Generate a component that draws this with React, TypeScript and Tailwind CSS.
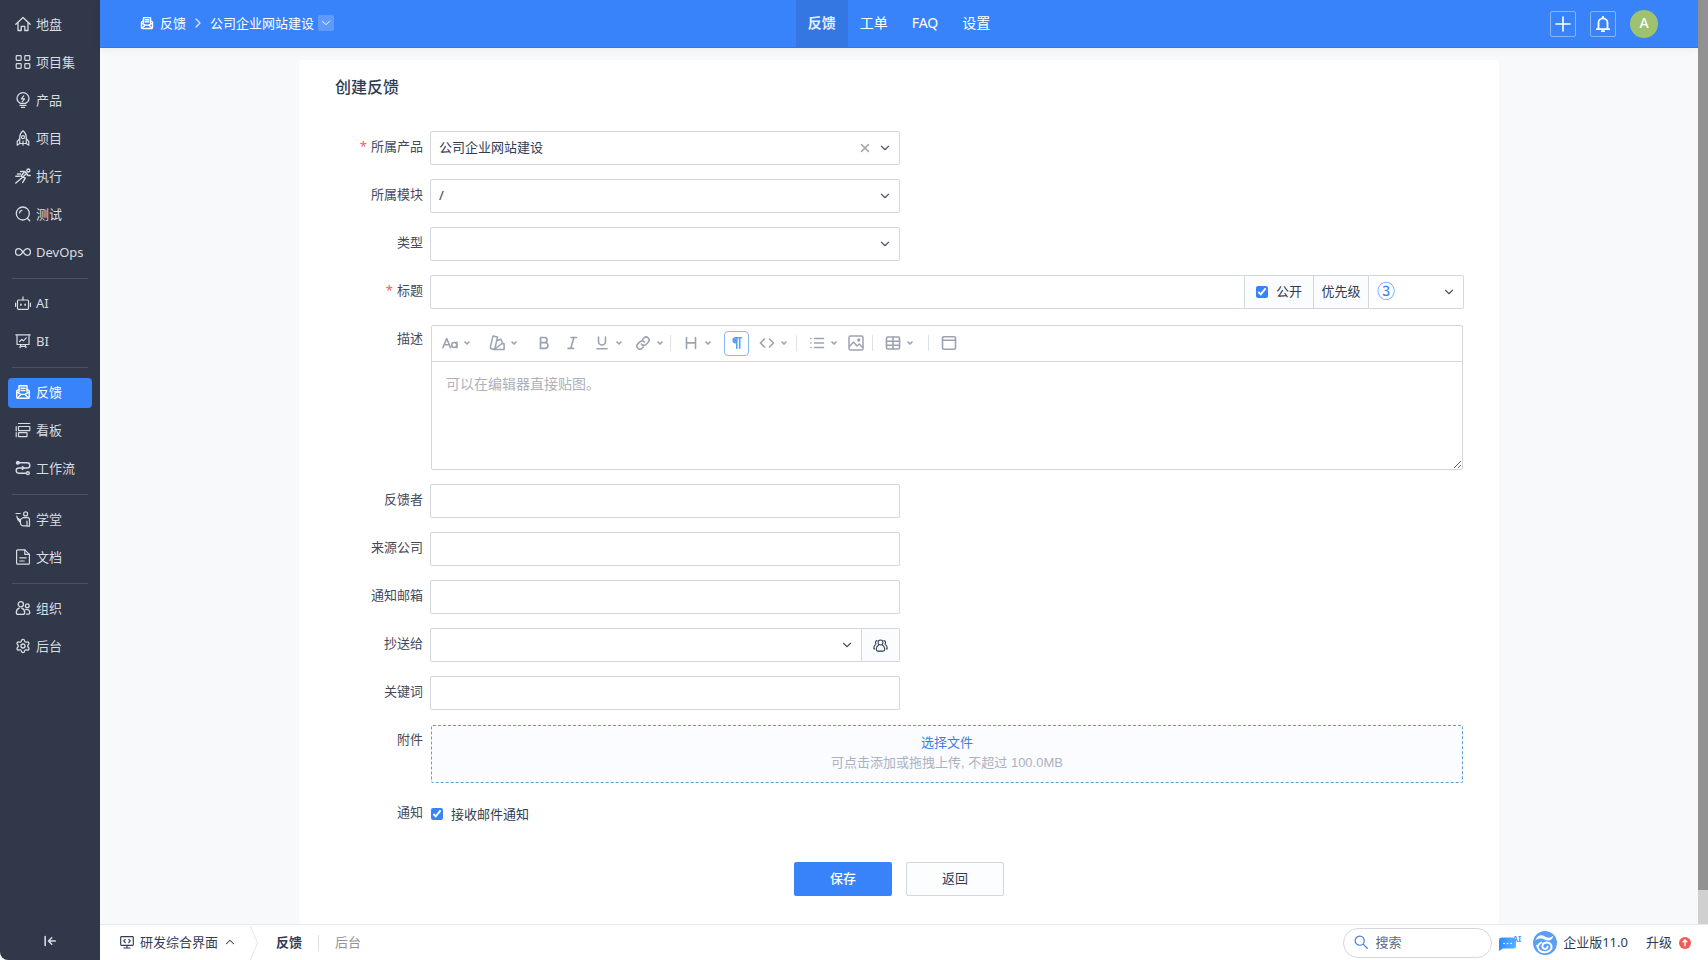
import type { ReactNode, SelectHTMLAttributes } from "react";
import { ChevronDown, ChevronRight, ChevronUp, Settings, X } from "lucide-react";

interface NavItem {
  label: string;
  icon: ReactNode;
  active?: boolean;
}

interface ToolbarItem {
  label: string;
  icon: ReactNode;
  className: string;
  menu?: boolean;
  active?: boolean;
  divider?: string;
}

interface IconProps {
  children: ReactNode;
  className?: string;
  width?: number;
}

function Icon({ children, className = "size-4", width = 1.2 }: IconProps) {
  return (
    <svg
      viewBox="0 0 16 16"
      fill="none"
      stroke="currentColor"
      strokeWidth={width}
      strokeLinecap="round"
      strokeLinejoin="round"
      aria-hidden="true"
      className={`shrink-0 ${className}`}
    >
      {children}
    </svg>
  );
}

const feedbackShape = (
  <>
    <path d="M4 8V1.8h8V8" />
    <path d="M6 4.3h4M6 6.5h4" />
    <path d="M4 5.2 1.7 6.8v6.4c0 .7.5 1.1 1.1 1.1h10.4c.6 0 1.1-.4 1.1-1.1V6.8L12 5.2" />
    <path d="M1.8 8.2 6 10.4h4l4.2-2.2M2.3 13.8 6 10.4M13.7 13.8 10 10.4" />
  </>
);

const navGroups: NavItem[][] = [
  [
    {
      label: "地盘",
      icon: (
        <Icon width={1.3}>
          <path d="M.8 8.3 8 1.5l7.2 6.8" />
          <path d="M3 6.8v7.7h3.2v-4.2h3.6v4.2H13V6.8" />
        </Icon>
      )
    },
    {
      label: "项目集",
      icon: (
        <Icon>
          <rect x="1.2" y="1.6" width="5" height="4.8" rx=".8" />
          <rect x="9.8" y="1.6" width="5" height="4.8" rx=".8" />
          <rect x="1.2" y="9.6" width="5" height="4.8" rx=".8" />
          <rect x="9.8" y="9.6" width="5" height="4.8" rx=".8" />
        </Icon>
      )
    },
    {
      label: "产品",
      icon: (
        <Icon>
          <path d="M5.4 11.4C3.3 10.3 2 8.7 2 6.5a6 5.9 0 0 1 12 0c0 2.200-1.300 3.800-3.400 4.900z" />
          <path d="M8.700 3.800 6.400 6.900h3.200L7.300 9.600" />
          <path d="M5 13.400h6M6.500 15.400h3" />
        </Icon>
      )
    },
    {
      label: "项目",
      icon: (
        <Icon>
          <path d="M8 .8C5.800 2.600 4.700 4.900 4.700 7.500v6h6.600v-6C11.300 4.900 10.200 2.600 8 .8z" />
          <circle cx="8" cy="7.200" r="1.500" />
          <path d="M4.700 8.600 2.200 11.500v3.700l2.500-1.700M11.300 8.600l2.500 2.900v3.700l-2.500-1.700M8 11.200v4" />
        </Icon>
      )
    },
    {
      label: "执行",
      icon: (
        <Icon width={1.4}>
          <circle cx="13.300" cy="2.500" r="1.500" />
          <path d="M5.500 3.500h4.200l2 1.700-4 4L.8 15M9.300 4.300 5.800 8.200l4.500 2-2.600 4.200M11.700 5.200l1 2.300h2.500" />
          <path d="M2.500 6h3M.8 8.300h3.500" />
        </Icon>
      )
    },
    {
      label: "测试",
      icon: (
        <Icon width={1.3}>
          <circle cx="7.800" cy="7.500" r="6.500" />
          <path d="m12.300 12.300 2.500 2.500M4.500 6.800a3.400 3.400 0 0 1 2.300-2.500" />
        </Icon>
      )
    },
    {
      label: "DevOps",
      icon: (
        <Icon width={1.4}>
          <path d="M8 8C6.700 6.200 5.600 4.600 3.900 4.600a3.400 3.400 0 0 0 0 6.800C5.600 11.400 6.700 9.800 8 8s2.400-3.400 4.100-3.400a3.400 3.400 0 0 1 0 6.800C10.400 11.400 9.300 9.800 8 8z" />
        </Icon>
      )
    }
  ],
  [
    {
      label: "AI",
      icon: (
        <Icon>
          <rect x="2.500" y="5" width="11" height="9.300" rx="1" />
          <path d="M8 5V1.800M.6 8v3.500M15.400 8v3.500" />
          <path d="M5.900 9.200v1M10.100 9.200v1" strokeWidth="1.600" />
        </Icon>
      )
    },
    {
      label: "BI",
      icon: (
        <Icon>
          <path d="M.8 1.800h14.400M2 1.800v9.700h12V1.800M6 11.500l-1 3.200M10 11.500l1 3.200M5 13.400h6" />
          <path d="m4.600 8.500 2.200-2.200 1.500 1.500 3-3" />
        </Icon>
      )
    }
  ],
  [
    { label: "反馈", active: true, icon: <Icon width={1.4}>{feedbackShape}</Icon> },
    {
      label: "看板",
      icon: (
        <Icon>
          <path d="M3.500 1.500h11.300M1.200 4.500v4.300M1.200 10.500v4.300" />
          <rect x="3.500" y="4.500" width="11.300" height="4.200" rx=".4" />
          <rect x="3.500" y="10.600" width="8.500" height="4" rx=".4" />
        </Icon>
      )
    },
    {
      label: "工作流",
      icon: (
        <Icon width={1.4}>
          <circle cx="2.800" cy="2.800" r="1.300" fill="currentColor" />
          <path d="M4 2.800h8.200a2.600 2.600 0 0 1 0 5.200H3.800a2.600 2.600 0 0 0 0 5.200h7.400" />
          <path d="m7.300 6.600 1.700 1.400-1.700 1.400" />
          <circle cx="12.900" cy="13.200" r="1.400" />
        </Icon>
      )
    }
  ],
  [
    {
      label: "学堂",
      icon: (
        <Icon>
          <path d="M1 2.500h4.200M1.800 5.200c.5 2.600 1.500 4.800 3.500 6M3.300 7.600l1.800 1.300L8 6.600h4.500c1.300 0 2 .8 2 2v6.500h-2.600M12 10v5M5.400 9.200v2.200c0 2.200 1.200 3.500 3.400 3.500H12" />
          <circle cx="10.600" cy="2.900" r="2" />
        </Icon>
      )
    },
    {
      label: "文档",
      icon: (
        <Icon>
          <path d="M9.800.8H2.600c-.6 0-1 .4-1 1v12.400c0 .6.4 1 1 1h10.800c.6 0 1-.4 1-1V5.400z" />
          <path d="M9.800.8v4.600h4.600M4.800 8.800h6.400M4.800 12h4.500" />
        </Icon>
      )
    }
  ],
  [
    {
      label: "组织",
      icon: (
        <Icon width={1.3}>
          <circle cx="5.800" cy="4.300" r="2.600" />
          <circle cx="12.300" cy="5.800" r="1.900" />
          <path d="M4.200 8.200c-1.800.7-2.900 2.300-2.900 4.300 0 1.200.7 1.900 1.900 1.900h4.600c1.200 0 1.900-.7 1.900-1.900 0-2-1.100-3.600-2.900-4.300M10.800 9.500c2.200-.5 4 .9 4 3.300 0 .9-.5 1.400-1.400 1.400h-1.700" />
        </Icon>
      )
    },
    { label: "后台", icon: <Settings className="size-4 shrink-0" /> }
  ]
];

const headerTabs = ["反馈", "工单", "FAQ", "设置"];

const toolbar: ToolbarItem[] = [
  {
    label: "字体",
    className: "",
    menu: true,
    icon: (
      <Icon width={1.6}>
        <path d="M.9 12.700 4.700 3.500l3.800 9.200M2.200 9.800h5" />
        <circle cx="12.300" cy="10" r="2.500" />
        <path d="M14.900 7.200v5.500" />
      </Icon>
    )
  },
  {
    label: "颜色",
    className: "ml-4.5",
    menu: true,
    icon: (
      <Icon width={1.5}>
        <path d="m4 1 4.500 1.100-2.300 10.300a2.400 2.400 0 0 1-4.700-1zM8.300 5.500l3.400-1.300 2 3.800-8.700 6.500M12.500 8.700h2.600v5.800H4.500" />
      </Icon>
    )
  },
  {
    label: "加粗",
    className: "ml-4.5",
    icon: (
      <Icon width={1.7}>
        <path d="M4.500 2.500h4a2.600 2.600 0 0 1 0 5.200h-4zM4.500 7.700h4.600a2.800 2.800 0 0 1 0 5.700H4.500z" />
      </Icon>
    )
  },
  {
    label: "斜体",
    className: "ml-3",
    icon: (
      <Icon width={1.6}>
        <path d="M7 2.500h5.500M4 13.400h5.500M9.900 2.500 6.700 13.400" />
      </Icon>
    )
  },
  {
    label: "下划线",
    className: "ml-3.5",
    menu: true,
    icon: (
      <Icon width={1.6}>
        <path d="M4.500 2v4.500a3.500 3.500 0 0 0 7 0V2M3 13.700h10" />
      </Icon>
    )
  },
  {
    label: "链接",
    className: "ml-3",
    menu: true,
    icon: (
      <Icon width={1.6}>
        <path d="M6.500 9.200a3 3 0 0 0 4.500.3l2.200-2.200a3 3 0 0 0-4.300-4.300L7.700 4.200M9.500 7a3 3 0 0 0-4.500-.3L2.800 8.900a3 3 0 0 0 4.300 4.300l1.200-1.200" />
      </Icon>
    )
  },
  {
    label: "标题",
    className: "ml-3",
    menu: true,
    divider: "ml-1.5",
    icon: (
      <Icon width={1.6}>
        <path d="M3.500 2.500v11M12.500 2.500v11M3.500 7.900h9" />
      </Icon>
    )
  },
  {
    label: "段落",
    className: "ml-3",
    active: true,
    icon: (
      <Icon width={1.6}>
        <path d="M7.800 7.800H6.300a2.600 2.600 0 0 1 0-5.100h6.200M7.800 2.700v10.500M10.700 2.700v10.500" />
        <path d="M5.500 4v2.500h2V4z" fill="currentColor" />
      </Icon>
    )
  },
  {
    label: "代码",
    className: "ml-2.5",
    menu: true,
    icon: (
      <Icon width={1.6}>
        <path d="M5.500 4 1.500 8l4 4M10.500 4l4 4-4 4" />
      </Icon>
    )
  },
  {
    label: "列表",
    className: "ml-3",
    menu: true,
    divider: "ml-2",
    icon: (
      <Icon width={1.6}>
        <path d="M5.500 3.500h9M5.500 8h9M5.500 12.500h9M1.800 3.500h.1M1.800 8h.1M1.800 12.500h.1" />
      </Icon>
    )
  },
  {
    label: "图片",
    className: "ml-2.5",
    icon: (
      <Icon width={1.5}>
        <rect x="1" y="1" width="14" height="14" rx="1.600" />
        <path d="m1.500 11.500 4-4.500 3.500 4 2.200-2 3.500 3.500" />
        <circle cx="10.800" cy="5" r=".9" fill="currentColor" />
      </Icon>
    )
  },
  {
    label: "表格",
    className: "ml-3",
    menu: true,
    divider: "ml-2",
    icon: (
      <Icon width={1.6}>
        <rect x="1.500" y="2" width="13" height="12" rx="1.200" />
        <path d="M1.500 6.200h13M1.500 10.200h13M8 2v12" />
      </Icon>
    )
  },
  {
    label: "面板",
    className: "ml-3",
    divider: "ml-3.5",
    icon: (
      <Icon width={1.6}>
        <rect x="1.500" y="1.700" width="13" height="12.600" rx="1.500" />
        <path d="M1.500 5.300h13" />
      </Icon>
    )
  }
];

const fieldClass =
  "h-[34px] w-full min-w-0 rounded-[2px] border border-[#d3d6de] bg-white px-2 pb-0.5 text-[#313c52] outline-none focus:border-[#3883fa]";

interface FieldRowProps {
  label: string;
  htmlFor: string;
  required?: boolean;
  wide?: boolean;
  children: ReactNode;
}

function FieldRow({ label, htmlFor, required, wide, children }: FieldRowProps) {
  return (
    <div className="flex items-start">
      <label
        htmlFor={htmlFor}
        className="w-[131px] shrink-0 pr-[7px] text-right leading-[31px] whitespace-nowrap text-[#44495c]"
      >
        {required && <span className="mr-1 text-[#ff5858]">*</span>}
        {label}
      </label>
      <div className={wide ? "min-w-0 flex-1" : "w-[470px] min-w-0"}>{children}</div>
    </div>
  );
}

interface SelectFieldProps extends SelectHTMLAttributes<HTMLSelectElement> {
  options: string[];
  clearable?: boolean;
}

function SelectField({ options, clearable, className = "", ...props }: SelectFieldProps) {
  return (
    <div className="relative min-w-0 flex-1">
      <select {...props} className={`appearance-none ${fieldClass} ${className}`}>
        {options.map((option) => (
          <option key={option}>{option}</option>
        ))}
      </select>
      {clearable && (
        <button type="button" aria-label="清除" className="absolute top-2.5 right-7 text-[#9ea3b0]">
          <X className="size-3.5" strokeWidth={2.5} />
        </button>
      )}
      <ChevronDown className="pointer-events-none absolute top-2.5 right-2 size-3.5 text-[#4b5468]" />
    </div>
  );
}

function Sidebar() {
  return (
    <aside className="flex w-[100px] shrink-0 flex-col rounded-bl-lg bg-[#303849] px-2 pt-2.5 text-[#d9dce2]">
      <nav className="flex-1">
        {navGroups.map((group, index) => (
          <div key={group[0].label}>
            {index > 0 && <hr className="mx-1 my-2.5 border-[#4a5161]" />}
            <ul className="flex flex-col gap-2">
              {group.map((item) => (
                <li key={item.label}>
                  <a
                    href="#"
                    className={`flex h-[30px] items-center gap-[5px] rounded pb-0.5 pl-[7px] leading-5 whitespace-nowrap ${
                      item.active ? "bg-[#3883fa] text-white" : ""
                    }`}
                  >
                    {item.icon}
                    {item.label}
                  </a>
                </li>
              ))}
            </ul>
          </div>
        ))}
      </nav>
      <button type="button" aria-label="收起菜单" className="mb-3 flex justify-center">
        <Icon className="size-3.5" width={1.8}>
          <path d="M2.500 3v10M14 8H6.500M10 4.300 6.300 8l3.700 3.700" />
        </Icon>
      </button>
    </aside>
  );
}

function Header() {
  return (
    <header className="z-10 grid h-12 shrink-0 grid-cols-[1fr_auto_1fr] border-b border-[#3577e2] bg-[#3883fa] text-white shadow-[0_2px_8px_rgba(0,0,0,0.05)]">
      <div className="flex items-center pb-px pl-10">
        <Icon className="size-3.5" width={1.6}>
          {feedbackShape}
        </Icon>
        <a href="#" className="ml-1.5">
          反馈
        </a>
        <ChevronRight className="mx-1 size-4 opacity-80" />
        <a href="#">公司企业网站建设</a>
        <button
          type="button"
          aria-label="切换产品"
          className="ml-1 flex size-4 items-center justify-center rounded-[2px] bg-white/20"
        >
          <ChevronDown className="size-3.5" strokeWidth={1.6} />
        </button>
      </div>
      <nav className="flex text-sm">
        {headerTabs.map((tab, index) => (
          <a
            key={tab}
            href="#"
            className={`flex items-center px-3 pb-0.5 ${index === 0 ? "bg-[#3577e2] font-bold text-[#e4edfd]" : ""}`}
          >
            {tab}
          </a>
        ))}
      </nav>
      <div className="flex items-center justify-end gap-3.5 pr-10">
        <button
          type="button"
          aria-label="新建"
          className="flex size-[26px] items-center justify-center rounded-[2px] border border-white/40"
        >
          <Icon width={1.6}>
            <path d="M8 1v14M1 8h14" />
          </Icon>
        </button>
        <button
          type="button"
          aria-label="消息"
          className="flex size-[26px] items-center justify-center rounded-[2px] border border-white/40"
        >
          <Icon width={1.8}>
            <path d="M3.500 13V6.800a4.500 4.500 0 0 1 9 0V13M1.800 13.200h12.400M8 .8v1.500M6.800 15.200h2.400" />
          </Icon>
        </button>
        <button type="button" aria-label="用户" className="size-7 rounded-full bg-[#9fc26e] pb-0.5 text-sm font-medium">
          A
        </button>
      </div>
    </header>
  );
}

function Editor() {
  return (
    <div className="mx-px mt-0.5 rounded-[2px] border border-[#d3d6de]">
      <div className="flex h-9 items-center border-b border-[#d3d6de] pb-px pl-2.5 text-[#9da2b0]">
        {toolbar.map((item) => (
          <div key={item.label} className="flex items-center">
            {item.divider && <span className={`h-4 w-px bg-[#dfe1e7] ${item.divider}`} />}
            <button
              type="button"
              aria-label={item.label}
              className={`flex items-center gap-[5px] ${item.className} ${
                item.active
                  ? "size-[25px] justify-center rounded border border-[#84b8f8] text-[#5aa0f5]"
                  : ""
              }`}
            >
              {item.icon}
              {item.menu && <ChevronDown className="size-2" strokeWidth={5} />}
            </button>
          </div>
        ))}
      </div>
      <textarea
        id="desc"
        placeholder="可以在编辑器直接贴图。"
        className="block h-[107px] w-full resize-y px-3.5 py-3 text-sm outline-none placeholder:text-[#adb1bb]"
      />
    </div>
  );
}

function FeedbackForm() {
  return (
    <form className="flex flex-col pr-[35px] pb-6" onSubmit={(event) => event.preventDefault()}>
      <h1 className="pt-[15px] pl-9 text-base leading-6 font-medium text-[#313c52]">创建反馈</h1>
      <div className="mt-8 flex flex-col gap-3.5">
        <FieldRow label="所属产品" htmlFor="product" required>
          <SelectField id="product" options={["公司企业网站建设"]} clearable />
        </FieldRow>
        <FieldRow label="所属模块" htmlFor="module">
          <SelectField id="module" options={["/"]} />
        </FieldRow>
        <FieldRow label="类型" htmlFor="type">
          <SelectField id="type" options={[""]} />
        </FieldRow>
        <FieldRow label="标题" htmlFor="title" required wide>
          <div className="flex">
            <input id="title" type="text" className={`${fieldClass} flex-1 rounded-r-none`} />
            <label className="flex h-[34px] w-[68px] shrink-0 items-center gap-2 border-y border-[#d3d6de] bg-[#fbfcfe] pl-[11px]">
              <input type="checkbox" defaultChecked className="size-3 accent-[#3883fa]" />
              <span className="pb-0.5">公开</span>
            </label>
            <label
              htmlFor="pri"
              className="flex h-[34px] w-[55px] shrink-0 items-center justify-center border-y border-l border-[#d3d6de] bg-[#fbfcfe] pb-0.5"
            >
              优先级
            </label>
            <div className="flex w-24 shrink-0">
              <SelectField
                id="pri"
                defaultValue="③"
                options={["①", "②", "③", "④"]}
                className="rounded-l-none text-[18px] text-[#3883fa]"
              />
            </div>
          </div>
        </FieldRow>
        <FieldRow label="描述" htmlFor="desc" wide>
          <Editor />
        </FieldRow>
        <FieldRow label="反馈者" htmlFor="feedbackBy">
          <input id="feedbackBy" type="text" className={fieldClass} />
        </FieldRow>
        <FieldRow label="来源公司" htmlFor="source">
          <input id="source" type="text" className={fieldClass} />
        </FieldRow>
        <FieldRow label="通知邮箱" htmlFor="email">
          <input id="email" type="email" className={fieldClass} />
        </FieldRow>
        <FieldRow label="抄送给" htmlFor="mailto">
          <div className="flex">
            <SelectField id="mailto" options={[""]} className="rounded-r-none" />
            <button
              type="button"
              aria-label="选择联系人"
              className="flex h-[34px] w-[38px] shrink-0 items-center justify-center rounded-r-[2px] border border-l-0 border-[#d3d6de] bg-[#fbfcfe]"
            >
              <Icon className="size-[15px]" width={1.1}>
                <circle cx="8" cy="4.800" r="2.600" />
                <path d="M5.800 7.700c-1.500.8-2.300 2.300-2.300 4.300 0 1.400.5 2 1.600 2h5.800c1.100 0 1.600-.6 1.600-2 0-2-.8-3.500-2.300-4.300" />
                <path d="M4.300 2.800C2.600 3 2 5.300 3.300 6.500 1.700 7.400.8 9 .9 11.600h1M11.700 2.800c1.700.2 2.300 2.500 1 3.700 1.600.9 2.500 2.500 2.400 5.100h-1" />
              </Icon>
            </button>
          </div>
        </FieldRow>
        <FieldRow label="关键词" htmlFor="keywords">
          <input id="keywords" type="text" className={fieldClass} />
        </FieldRow>
        <FieldRow label="附件" htmlFor="files" wide>
          <label className="mx-px mt-px flex h-[58px] cursor-pointer flex-col items-center justify-center rounded-[2px] border border-dashed border-[#5c9ed6] bg-[#fafcff] pb-0.5 font-['Liberation_Sans','Noto_Sans_CJK_SC',sans-serif] leading-5">
            <span className="text-[#3a7fe8]">选择文件</span>
            <span className="text-[#adb1bf]">可点击添加或拖拽上传, 不超过 100.0MB</span>
            <input id="files" type="file" multiple className="sr-only" />
          </label>
        </FieldRow>
        <FieldRow label="通知" htmlFor="notify" wide>
          <label className="flex h-[34px] items-center gap-2 pl-px">
            <input id="notify" type="checkbox" defaultChecked className="size-3 accent-[#3883fa]" />
            接收邮件通知
          </label>
        </FieldRow>
      </div>
      <div className="mt-[31px] ml-[35px] flex justify-center gap-3.5">
        <button type="submit" className="h-[34px] w-[98px] rounded-[2px] bg-[#3883fa] pb-0.5 font-medium text-white">
          保存
        </button>
        <button type="button" className="h-[34px] w-[98px] rounded-[2px] border border-[#d3d6de] bg-[#fcfdfe] pb-0.5">
          返回
        </button>
      </div>
    </form>
  );
}

function Footer() {
  return (
    <footer className="z-10 flex h-9 shrink-0 items-center border-t border-[#e6e8ec] bg-white">
      <button type="button" className="flex items-center pb-px pl-5">
        <Icon className="size-3.5" width={1.3}>
          <rect x=".8" y="1.800" width="14.400" height="10" rx="1" />
          <path d="M8 11.800v3M4.500 14.800h7M6 5 4.200 6.800 6 8.600M10 5l1.800 1.800L10 8.600" />
        </Icon>
        <span className="ml-1.5">研发综合界面</span>
        <ChevronUp className="ml-[5px] size-3.5" strokeWidth={1.8} />
      </button>
      <svg viewBox="0 0 8 34" className="ml-[13px] h-[34px] w-2" fill="none" stroke="#e3e5ea" aria-hidden="true">
        <path d="M.5 0 7.500 17 .5 34" />
      </svg>
      <a href="#" className="ml-4.5 pb-0.5 font-bold">
        反馈
      </a>
      <span className="mx-4 h-4 w-px bg-[#dcdee4]" />
      <a href="#" className="pb-0.5 text-[#8f939e]">
        后台
      </a>
      <div className="ml-auto flex h-[30px] w-[149px] items-center gap-2 rounded-full border border-[#d3d6e0] pb-px pl-2.5">
        <Icon className="size-3.5 text-[#3f7fe0]" width={1.4}>
          <circle cx="6.500" cy="6.500" r="5.200" />
          <path d="m10.500 10.500 4.700 4.700" />
        </Icon>
        <input
          type="search"
          aria-label="搜索"
          placeholder="搜索"
          className="w-24 min-w-0 outline-none placeholder:text-[#5e6a80]"
        />
      </div>
      <button type="button" aria-label="AI 助手" className="ml-[7px] flex items-start">
        <svg viewBox="0 0 18 14" className="mt-0.5 h-3.5 w-[18px]" aria-hidden="true">
          <defs>
            <linearGradient id="chatFill" x1="0" y1="0" x2="1" y2="0">
              <stop offset="0" stopColor="#2f8bff" />
              <stop offset="1" stopColor="#55b4ff" />
            </linearGradient>
          </defs>
          <path d="M3 .5h11l3 2V9a2.500 2.500 0 0 1-2.500 2.500H4L0 14V3.500a3 3 0 0 1 3-3z" fill="url(#chatFill)" />
          <path d="M5 6.500h.1M8.500 6.500h.1M12 6.500h.1" stroke="#fff" strokeWidth="1.600" strokeLinecap="round" />
        </svg>
        <span className="-ml-1 text-[8px] leading-2 font-bold text-[#4d9df5]">AI</span>
      </button>
      <a href="#" className="ml-3 flex items-center gap-1.5">
        <svg viewBox="0 0 24 24" className="size-6" aria-hidden="true">
          <circle cx="12" cy="12" r="12" fill="#5b9ff5" />
          <path
            d="M2.500 9.500C3.800 5 8 3 11.500 5.300c3.300 2.200 6 1.700 8.800-.5-.6 4.200-4.300 6-8.300 4C8.500 7 5.300 7 2.500 9.500z"
            fill="#fff"
          />
          <g fill="none" stroke="#fff" strokeLinecap="round">
            <path d="M6.200 19.300C7.700 20.800 10 21.500 12.300 21.300c4.200-.3 6.700-3.300 6.200-6.200-.5-2.800-3.400-4.200-6.400-3.300-3.200 1-3.600 4.600-1.300 5.800 1.800.9 3.900-.2 3.700-1.900" strokeWidth="2" />
            <path d="M4 14.500c.3 1.500 1 2.800 2 3.800M8.500 11.500c-2.200.8-3.500 2.500-3.500 4.500" strokeWidth="1.700" />
          </g>
        </svg>
        <span className="pb-0.5">企业版11.0</span>
      </a>
      <a href="#" className="mr-[17px] ml-4.5 flex items-center gap-[7px]">
        <span className="pb-0.5">升级</span>
        <svg viewBox="0 0 12 12" className="size-3" aria-hidden="true">
          <circle cx="6" cy="6" r="6" fill="#f35b56" />
          <path d="M6 9.200V3M3.700 5.200 6 2.900l2.300 2.300" fill="none" stroke="#fff" strokeWidth="1.400" />
        </svg>
      </a>
    </footer>
  );
}

export default function App() {
  return (
    <div className="flex h-screen min-h-[480px] bg-white font-['Noto_Sans','Noto_Sans_CJK_SC',sans-serif] text-[13px] leading-5 text-[#313c52]">
      <Sidebar />
      <div className="flex min-w-0 flex-1 flex-col">
        <div className="flex min-h-0 flex-1">
          <div className="flex min-w-0 flex-1 flex-col bg-[#f8f9fb]">
            <Header />
            <main className="flex-1 overflow-y-auto pt-3 [scrollbar-width:none]">
              <section className="mx-auto min-h-full max-w-[1200px] rounded bg-white">
                <FeedbackForm />
              </section>
            </main>
          </div>
          <div className="flex w-2.5 shrink-0 flex-col bg-[#d0d0d0] pb-[34px]">
            <div className="flex-1 bg-[#929292]" />
          </div>
        </div>
        <Footer />
      </div>
    </div>
  );
}
